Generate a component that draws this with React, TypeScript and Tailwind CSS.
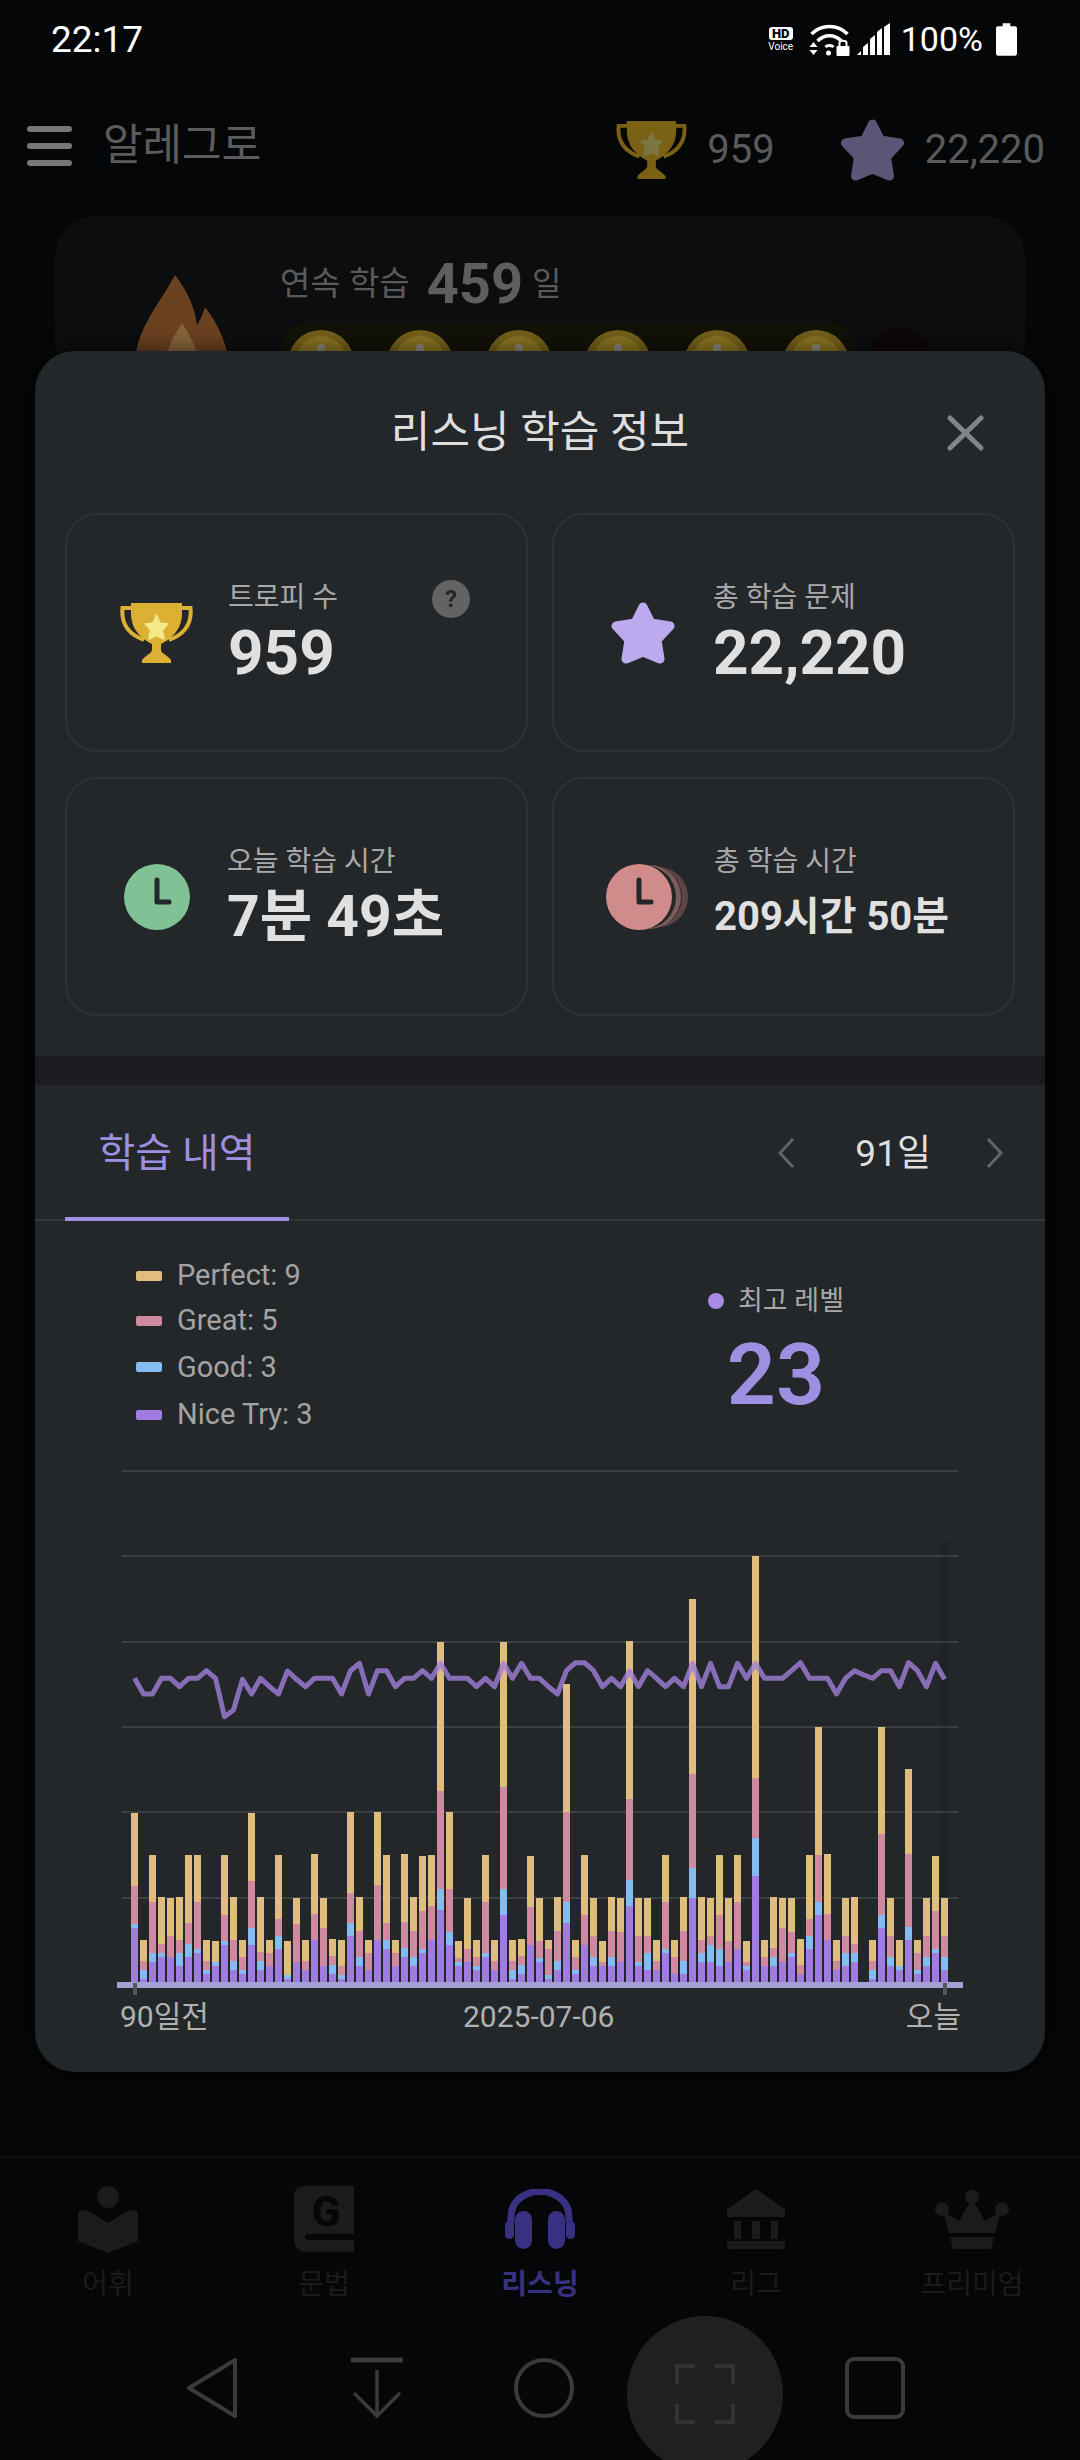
const BARS: number[][] = [
[819,1038,1152,1164],[1200,1263,1290,1317],[945,1086,1239,1266],[1071,1212,1239,1251],[1074,1188,1251,1251],[1071,1200,1239,1278],[945,1149,1212,1251],[945,1086,1227,1239],[1200,1263,1290,1302],[1203,1266,1266,1278],
[945,1125,1203,1215],[1071,1200,1263,1290],[1200,1251,1290,1302],[819,1023,1164,1215],[1071,1236,1263,1290],[1200,1239,1278,1278],[945,1137,1188,1227],[1203,1305,1305,1317],[1074,1152,1266,1266],[1200,1263,1290,1290],
[942,1122,1200,1200],[1074,1164,1278,1278],[1197,1248,1275,1302],[1200,1278,1305,1317],[816,1059,1149,1188],[1071,1173,1251,1278],[1200,1239,1290,1290],[816,1035,1200,1200],[945,1149,1200,1227],[1200,1239,1278,1278],
[942,1146,1224,1251],[1071,1173,1251,1278],[948,1113,1227,1239],[945,1098,1200,1200],[306,753,1047,1110],[816,1047,1176,1215],[1203,1254,1266,1278],[1074,1227,1266,1266],[1200,1251,1278,1290],[945,1086,1239,1251],
[1200,1263,1290,1290],[306,741,1047,1125],[1200,1263,1290,1317],[1197,1248,1275,1302],[948,1101,1215,1215],[1074,1203,1254,1266],[1200,1227,1305,1317],[1071,1173,1263,1290],[432,816,1086,1149],[1200,1251,1290,1302],
[945,1125,1215,1215],[1074,1188,1251,1278],[1203,1266,1278,1278],[1071,1173,1251,1278],[1074,1176,1266,1266],[303,777,1020,1098],[1074,1188,1266,1278],[1074,1188,1239,1290],[1200,1263,1290,1290],[945,1086,1227,1239],
[1200,1251,1302,1302],[1071,1173,1263,1302],[177,702,984,1074],[1071,1200,1239,1266],[1074,1188,1215,1266],[945,1125,1227,1278],[1074,1203,1266,1266],[945,1086,1227,1227],[1203,1266,1278,1290],[48,714,894,1008],
[1200,1251,1278,1278],[1071,1224,1251,1278],[1074,1164,1266,1266],[1074,1176,1239,1251],[1197,1275,1302,1302],[945,1137,1188,1227],[561,945,1086,1125],[942,1122,1200,1200],[1200,1263,1290,1290],[1074,1188,1239,1278],
[1071,1212,1239,1266],[1326,1326,1326,1326],[1200,1263,1290,1317],[561,882,1125,1164],[1074,1188,1251,1278],[1200,1278,1278,1290],[687,942,1161,1200],[1200,1239,1290,1302],[1074,1188,1251,1278],[948,1113,1227,1239],
[1074,1188,1251,1290],
];
const LINE = [415,462,462,415,415,440,415,415,392,415,530,510,418,462,415,440,462,393,418,440,415,415,415,462,392,370,462,392,392,440,415,415,392,415,370,415,415,415,440,415,440,370,415,370,415,415,440,462,392,368,368,392,440,415,440,393,440,392,415,440,415,440,370,440,370,440,440,370,415,370,415,415,415,392,368,415,415,415,462,415,392,404,415,392,392,440,368,392,440,370,418];
const py = (z: number) => 1540 + z / 3;
const COLORS = ['#dfbd7f', '#cf8a9f', '#84bbf0', '#a07be0'];

function Chart() {
  const pts = LINE.map((z, i) => `${134.5 + 9 * i},${py(z).toFixed(1)}`).join(' ');
  return (
    <svg width={1010} height={540} viewBox="35 1460 1010 540" className="block">
      {[1471, 1556, 1642, 1727, 1812, 1898].map((y) => (
        <rect key={y} x={122} y={y - 1} width={836} height={2} fill="#3c4043" />
      ))}
      <rect x={940} y={1540} width={9} height={442} fill="#000" opacity={0.1} />
      {BARS.map((b, i) => {
        const x = 131 + 9 * i;
        const edges = [...b, 1326];
        return (
          <g key={i}>
            {COLORS.map((c, k) => (
              <rect key={k} x={x} y={py(edges[k])} width={7} height={(edges[k + 1] - edges[k]) / 3} fill={c} />
            ))}
          </g>
        );
      })}
      <polyline points={pts} fill="none" stroke="#a080d8" strokeOpacity={0.8} strokeWidth={5} strokeLinejoin="round" />
      <rect x={117} y={1982} width={846} height={6} fill="#a5a0d4" />
      <rect x={133} y={1983} width={4} height={12} fill="#555" />
      <rect x={943} y={1983} width={4} height={12} fill="#555" />
    </svg>
  );
}

function Trophy({ w, h, gold, star }: { w: number; h: number; gold: string; star: string }) {
  return (
    <svg width={w} height={h} viewBox="0 0 75 60" className="shrink-0">
      <path d="M14 5H3.500C2 20 9 31 25 37" fill="none" stroke={gold} strokeWidth={4} />
      <path d="M61 5H71.500C73 20 66 31 50 37" fill="none" stroke={gold} strokeWidth={4} />
      <path d="M12 0H63V12C62 29 50 37 42 41V47C42 50 48 52 52 57V60H23V57C27 52 33 50 33 47V41C25 37 13 29 12 12Z" fill={gold} />
      <path d="M37.500 12L41 20L48.500 21L43.500 27L45 36L37.500 32.500L30 36L31.500 27L26.500 21L34 20Z" fill={star} stroke={star} strokeWidth={1.500} strokeLinejoin="round" />
    </svg>
  );
}

function Star({ w, h, color }: { w: number; h: number; color: string }) {
  return (
    <svg width={w} height={h} viewBox="0 0 64 62" className="shrink-0">
      <path d="M32 5L40 21L59 24L46 38L49 57L32 50L15 57L18 38L5 24L24 21Z" fill={color} stroke={color} strokeWidth={9} strokeLinejoin="round" />
    </svg>
  );
}

function Clock({ color }: { color: string }) {
  return (
    <svg width={66} height={66} viewBox="0 0 66 66" className="shrink-0">
      <circle cx={33} cy={33} r={33} fill={color} />
      <path d="M33 16V38H45" fill="none" stroke="#24272a" strokeWidth={5} strokeLinecap="round" strokeLinejoin="round" />
    </svg>
  );
}

function StatCard({ icon, label, value, valueClass, extra, iconBox }: { icon: React.ReactNode; label: string; value: string; valueClass: string; extra?: React.ReactNode; iconBox: string }) {
  return (
    <div className="relative flex h-[239px] items-center rounded-[32px] border-2 border-[#2e3136]">
      <div className={`flex items-center justify-center ${iconBox}`}>{icon}</div>
      <div className="flex flex-col">
        <span className="text-[28px] leading-[38px] text-[#a8a8a8]">{label}</span>
        <span className={`mt-[3px] h-[66px] font-bold leading-[66px] text-[#e0e0e0] ${valueClass}`}>{value}</span>
      </div>
      {extra}
    </div>
  );
}

function Legend({ color, label, h }: { color: string; label: string; h: string }) {
  return (
    <div className={`flex items-center gap-[15px] ${h}`}>
      <span className={`h-[10px] w-[26px] rounded-[2px] ${color}`} />
      <span className="text-[29px] leading-none text-[#a3a3a3]">{label}</span>
    </div>
  );
}

function NavItem({ icon, label, active }: { icon: React.ReactNode; label: string; active?: boolean }) {
  return (
    <div className="flex w-[216px] flex-col items-center">
      <div className="flex h-[76px] items-center justify-center">{icon}</div>
      <span className={`mt-[10px] text-[28px] leading-[36px] ${active ? 'font-bold text-[#3a3082]' : 'text-[#1a1b1c]'}`}>{label}</span>
    </div>
  );
}

export default function App() {
  return (
    <div className="relative flex h-[2460px] w-[1080px] flex-col overflow-hidden bg-[#050607] font-['Roboto','Noto_Sans_CJK_KR',sans-serif]">
      {/* status bar */}
      <div className="flex h-[76px] items-center justify-between pl-[51px] pr-[63px] pt-[2px] text-white">
        <span className="text-[37px] leading-none">22:17</span>
        <div className="flex items-center gap-[7px]">
          <div className="flex w-[30px] flex-col items-center leading-none">
            <span className="rounded-[3px] bg-white px-[3px] text-[13px] font-black leading-[13px] text-black">HD</span>
            <span className="mt-[2px] text-[10px] leading-[10px]">Voice</span>
          </div>
          <svg width={41} height={34} viewBox="0 0 40 34" className="ml-[6px]">
            <path d="M2 12C12 2 28 2 38 12M8 19C15 12 25 12 32 19" fill="none" stroke="#fff" strokeWidth={3.500} />
            <path d="M16 25C18 23 22 23 24 25" fill="none" stroke="#fff" strokeWidth={3} />
            <circle cx={19} cy={31} r={2.500} fill="#fff" />
            <path d="M0 25L4 20L8 25ZM0 28L4 33L8 28Z" fill="#fff" />
            <rect x={27} y={24} width={13} height={10} rx={1} fill="#fff" />
            <path d="M30 24V21C30 18 37 18 37 21V24" fill="none" stroke="#fff" strokeWidth={2} />
          </svg>
          <svg width={33} height={32} viewBox="0 0 33 32">
            <path d="M0 32L4 28V32ZM6 32V24L11 20V32ZM13 32V16L18 12V32ZM20 32V9L25 5V32ZM27 32V4L33 0V32Z" fill="#fff" />
          </svg>
          <span className="ml-[4px] text-[34px] leading-none">100%</span>
          <svg width={21} height={33} viewBox="0 0 22 34" className="ml-[6px]">
            <path d="M7 0H15V3H20C21 3 22 4 22 5V32C22 33 21 34 20 34H2C1 34 0 33 0 32V5C0 4 1 3 2 3H7Z" fill="#fff" />
          </svg>
        </div>
      </div>

      {/* app header */}
      <div className="flex h-[140px] items-start pl-[27px] pr-[35px] pt-[43px]">
        <div className="mt-[5px] flex h-[44px] w-[45px] flex-col justify-between py-[2px]">
          <span className="h-[6px] rounded-full bg-[#777]" />
          <span className="h-[6px] rounded-full bg-[#777]" />
          <span className="h-[6px] rounded-full bg-[#777]" />
        </div>
        <span className="ml-[31px] mt-[1px] text-[43px] leading-[50px] text-[#5c5c5c]">알레그로</span>
        <div className="ml-auto flex items-center">
          <Trophy w={73} h={58} gold="#7a6114" star="#7d7642" />
          <span className="ml-[19px] text-[40px] leading-[50px] text-[#5a5a5a]">959</span>
          <div className="ml-[65px]"><Star w={65} h={62} color="#5b5576" /></div>
          <span className="ml-[20px] text-[40px] leading-[50px] text-[#5a5a5a]">22,220</span>
        </div>
      </div>

      {/* streak card behind the sheet */}
      <div className="mx-[55px] flex h-[220px] rounded-[40px] bg-[#0b0d0e] pl-[80px] pt-[38px]">
        <svg width={94} height={130} viewBox="0 0 94 130" className="mt-[21px] shrink-0">
          <path d="M40 0C54 18 60 34 62 50C66 44 68 38 70 32C84 50 94 72 94 95C94 115 72 130 47 130C22 130 0 115 0 90C0 55 24 30 40 0Z" fill="#6b4220" />
          <path d="M47 48C56 62 64 76 64 92C64 110 30 110 30 92C30 76 38 62 47 48Z" fill="#86663a" />
        </svg>
        <div className="ml-[51px] flex flex-col">
          <div className="flex h-[60px] items-center">
            <span className="text-[33px] text-[#5a5a5a]">연속 학습</span>
            <span className="ml-[17px] text-[56px] font-bold leading-none text-[#5e5e5e]">459</span>
            <span className="ml-[9px] text-[32px] text-[#5a5a5a]">일</span>
          </div>
          <div className="mt-[8px] flex gap-[10px]">
            <div className="flex h-[80px] w-[577px] gap-[33px] rounded-t-[30px] bg-[#131208] pl-[8px] pt-[8px]">
              {[0, 1, 2, 3, 4, 5].map((i) => (
                <span key={i} className="flex h-[66px] w-[66px] shrink-0 items-start justify-center rounded-full bg-[#75611a] pt-[6px]">
                  <span className="flex h-[50px] w-[50px] justify-center rounded-full bg-[#8a7520] pt-[8px]">
                    <span className="h-[16px] w-[8px] rounded-t-full bg-[#8a8a80]" />
                  </span>
                </span>
              ))}
            </div>
            <span className="mt-[6px] h-[66px] w-[66px] rounded-full bg-[#0e0708]" />
          </div>
        </div>
      </div>

      <div className="flex-1" />

      {/* bottom nav */}
      <div className="flex h-[170px] border-t-2 border-[#0f1112] pt-[23px]">
        <NavItem label="어휘" icon={
          <svg width={60} height={68} viewBox="0 0 60 68"><circle cx={30} cy={12} r={11} fill="#1a1b1c" /><path d="M0 30C0 24 6 24 12 27L30 38L48 27C54 24 60 24 60 30V56L30 68L0 56Z" fill="#1a1b1c" /></svg>
        } />
        <NavItem label="문법" icon={
          <svg width={60} height={66} viewBox="0 0 60 66"><path d="M10 0H60V48H14C10 48 10 54 14 54H60V66H12C4 66 0 60 0 54V10C0 4 4 0 10 0Z" fill="#1a1b1c" /><text x={32} y={40} textAnchor="middle" fontSize={42} fontWeight={800} fontFamily="Roboto" fill="#050607">G</text></svg>
        } />
        <NavItem label="리스닝" active icon={
          <svg width={70} height={60} viewBox="0 0 70 60"><path d="M6 34V28C6 -6 64 -6 64 28V34" fill="none" stroke="#3a3082" strokeWidth={7} /><rect x={10} y={22} width={17} height={38} rx={8.500} fill="#3a3082" /><rect x={43} y={22} width={17} height={38} rx={8.500} fill="#3a3082" /><rect x={0} y={32} width={9} height={18} rx={4.500} fill="#3a3082" /><rect x={61} y={32} width={9} height={18} rx={4.500} fill="#3a3082" /></svg>
        } />
        <NavItem label="리그" icon={
          <svg width={58} height={60} viewBox="0 0 58 60"><path d="M29 0L58 20V28H0V20Z" fill="#1a1b1c" /><path d="M7 32H14V50H7ZM25 32H33V50H25ZM44 32H51V50H44Z" fill="#1a1b1c" /><rect x={0} y={52} width={58} height={8} rx={2} fill="#1a1b1c" /></svg>
        } />
        <NavItem label="프리미엄" icon={
          <svg width={74} height={60} viewBox="0 0 74 60"><circle cx={37} cy={8} r={7} fill="#1a1b1c" /><circle cx={7} cy={20} r={7} fill="#1a1b1c" /><circle cx={67} cy={20} r={7} fill="#1a1b1c" /><path d="M37 10L50 32L66 22L60 44H14L8 22L24 32Z" fill="#1a1b1c" /><path d="M15 48H59L56 60H18Z" fill="#1a1b1c" /></svg>
        } />
      </div>

      {/* android nav */}
      <div className="flex h-[134px] items-start pl-[186px] pt-[31px]">
        <svg width={52} height={62} viewBox="0 0 52 62"><path d="M49 3V59L3 31Z" fill="none" stroke="#3a3a3a" strokeWidth={4} strokeLinejoin="round" /></svg>
        <svg width={54} height={62} viewBox="0 0 54 62" className="ml-[112px]"><path d="M1 3H53" stroke="#3a3a3a" strokeWidth={5} /><path d="M27 13V59M4 36L27 59L50 36" fill="none" stroke="#3a3a3a" strokeWidth={3.500} /></svg>
        <svg width={60} height={62} viewBox="0 0 60 62" className="ml-[110px]"><circle cx={30} cy={31} r={28} fill="none" stroke="#3a3a3a" strokeWidth={4} /></svg>
        <svg width={60} height={62} viewBox="0 0 60 62" className="ml-[271px]"><rect x={2} y={2} width={56} height={58} rx={7} fill="none" stroke="#3a3a3a" strokeWidth={4} /></svg>
      </div>

      {/* screenshot button overlay */}
      <div className="absolute left-[627px] top-[2316px] flex h-[156px] w-[156px] items-center justify-center rounded-full bg-[#202020]">
        <svg width={60} height={60} viewBox="0 0 60 60"><path d="M20 2H2V20M40 2H58V20M2 40V58H20M58 40V58H40" fill="none" stroke="#333" strokeWidth={4} /></svg>
      </div>

      {/* sheet */}
      <div className="absolute left-[35px] top-[351px] flex h-[1721px] w-[1010px] flex-col rounded-[40px] bg-[#24272a] shadow-[0_0_24px_rgba(0,0,0,0.6)]">
        <div className="relative flex h-[162px] shrink-0 items-center justify-center">
          <span className="text-[43px] leading-none text-[#dedede]">리스닝 학습 정보</span>
          <svg width={37} height={36} viewBox="0 0 37 36" className="absolute left-[912px] top-[64px]">
            <path d="M3 3L34 33M34 3L3 33" stroke="#7e858b" strokeWidth={5} strokeLinecap="round" />
          </svg>
        </div>
        <div className="grid shrink-0 grid-cols-2 gap-x-[24px] gap-y-[25px] px-[30px]">
          <StatCard iconBox="ml-[52px] mr-[34px]" icon={<Trophy w={75} h={60} gold="#dcb033" star="#f4e98a" />} label="트로피 수" value="959" valueClass="text-[62px]" extra={
            <span className="absolute left-[365px] top-[65px] flex h-[38px] w-[38px] items-center justify-center rounded-full bg-[#636363] text-[24px] font-bold leading-none text-[#24272a]">?</span>
          } />
          <StatCard iconBox="ml-[57px] mr-[38px]" icon={<Star w={64} h={62} color="#bcaaee" />} label="총 학습 문제" value="22,220" valueClass="text-[62px]" />
          <StatCard iconBox="ml-[57px] mr-[37px]" icon={<Clock color="#80c195" />} label="오늘 학습 시간" value="7분 49초" valueClass="text-[57px]" />
          <StatCard iconBox="ml-[52px] mr-[26px]" icon={
            <div className="relative h-[66px] w-[82px]">
              <span className="absolute left-[16px] top-[3px] h-[60px] w-[66px] rounded-full bg-[#5d4547]" />
              <span className="absolute left-[10px] top-[2px] h-[62px] w-[66px] rounded-full bg-[#24272a]" />
              <span className="absolute left-[9px] top-[1px] h-[64px] w-[66px] rounded-full bg-[#7d5a5c]" />
              <span className="absolute left-[4px] top-[1px] h-[64px] w-[66px] rounded-full bg-[#24272a]" />
              <div className="absolute left-0 top-0"><Clock color="#d08b8b" /></div>
            </div>
          } label="총 학습 시간" value="209시간 50분" valueClass="text-[40px]" />
        </div>
        <div className="mt-[40px] h-[29px] shrink-0 bg-[#1a1c1f]" />

        {/* tabs */}
        <div className="flex h-[136px] shrink-0 items-start border-b-2 border-[#33363a]">
          <div className="ml-[30px] flex h-[136px] w-[224px] items-center justify-center border-b-4 border-[#9f8fe0] pt-[6px]">
            <span className="text-[40px] leading-none text-[#9f8fe0]">학습 내역</span>
          </div>
          <div className="ml-auto flex h-[132px] items-center pr-[41px] pt-[4px]">
            <svg width={18} height={32} viewBox="0 0 18 32"><path d="M16 2L3 16L16 30" fill="none" stroke="#5c656c" strokeWidth={3} /></svg>
            <span className="ml-[60px] text-[37px] leading-none text-[#dedede]">91일</span>
            <svg width={18} height={32} viewBox="0 0 18 32" className="ml-[55px]"><path d="M2 2L15 16L2 30" fill="none" stroke="#5c656c" strokeWidth={3} /></svg>
          </div>
        </div>

        {/* summary */}
        <div className="flex h-[242px] shrink-0 pt-[32px]">
          <div className="ml-[101px] flex w-[540px] flex-col">
            <Legend color="bg-[#dfbd7f]" label="Perfect: 9" h="h-[45px]" />
            <Legend color="bg-[#cf8a9f]" label="Great: 5" h="h-[45px]" />
            <Legend color="bg-[#84bbf0]" label="Good: 3" h="h-[48px]" />
            <Legend color="bg-[#a07be0]" label="Nice Try: 3" h="h-[47px]" />
          </div>
          <div className="flex w-[200px] flex-col items-center pt-[30px]">
            <div className="flex h-[36px] items-center gap-[14px]">
              <span className="h-[16px] w-[16px] rounded-full bg-[#a98ae6]" />
              <span className="text-[27px] leading-none text-[#a8a8a8]">최고 레벨</span>
            </div>
            <span className="mt-[8px] text-[86px] font-semibold leading-[96px] text-[#9f8fe0]">23</span>
          </div>
        </div>

        <div className="-mt-[3px]"><Chart /></div>

        <div className="-mt-[1px] flex pl-[85px] pr-[84px] text-[30px] leading-[36px] text-[#b0b0b0]">
          <span className="w-[343px]">90일전</span>
          <span>2025-07-06</span>
          <span className="ml-auto">오늘</span>
        </div>
      </div>
    </div>
  );
}
